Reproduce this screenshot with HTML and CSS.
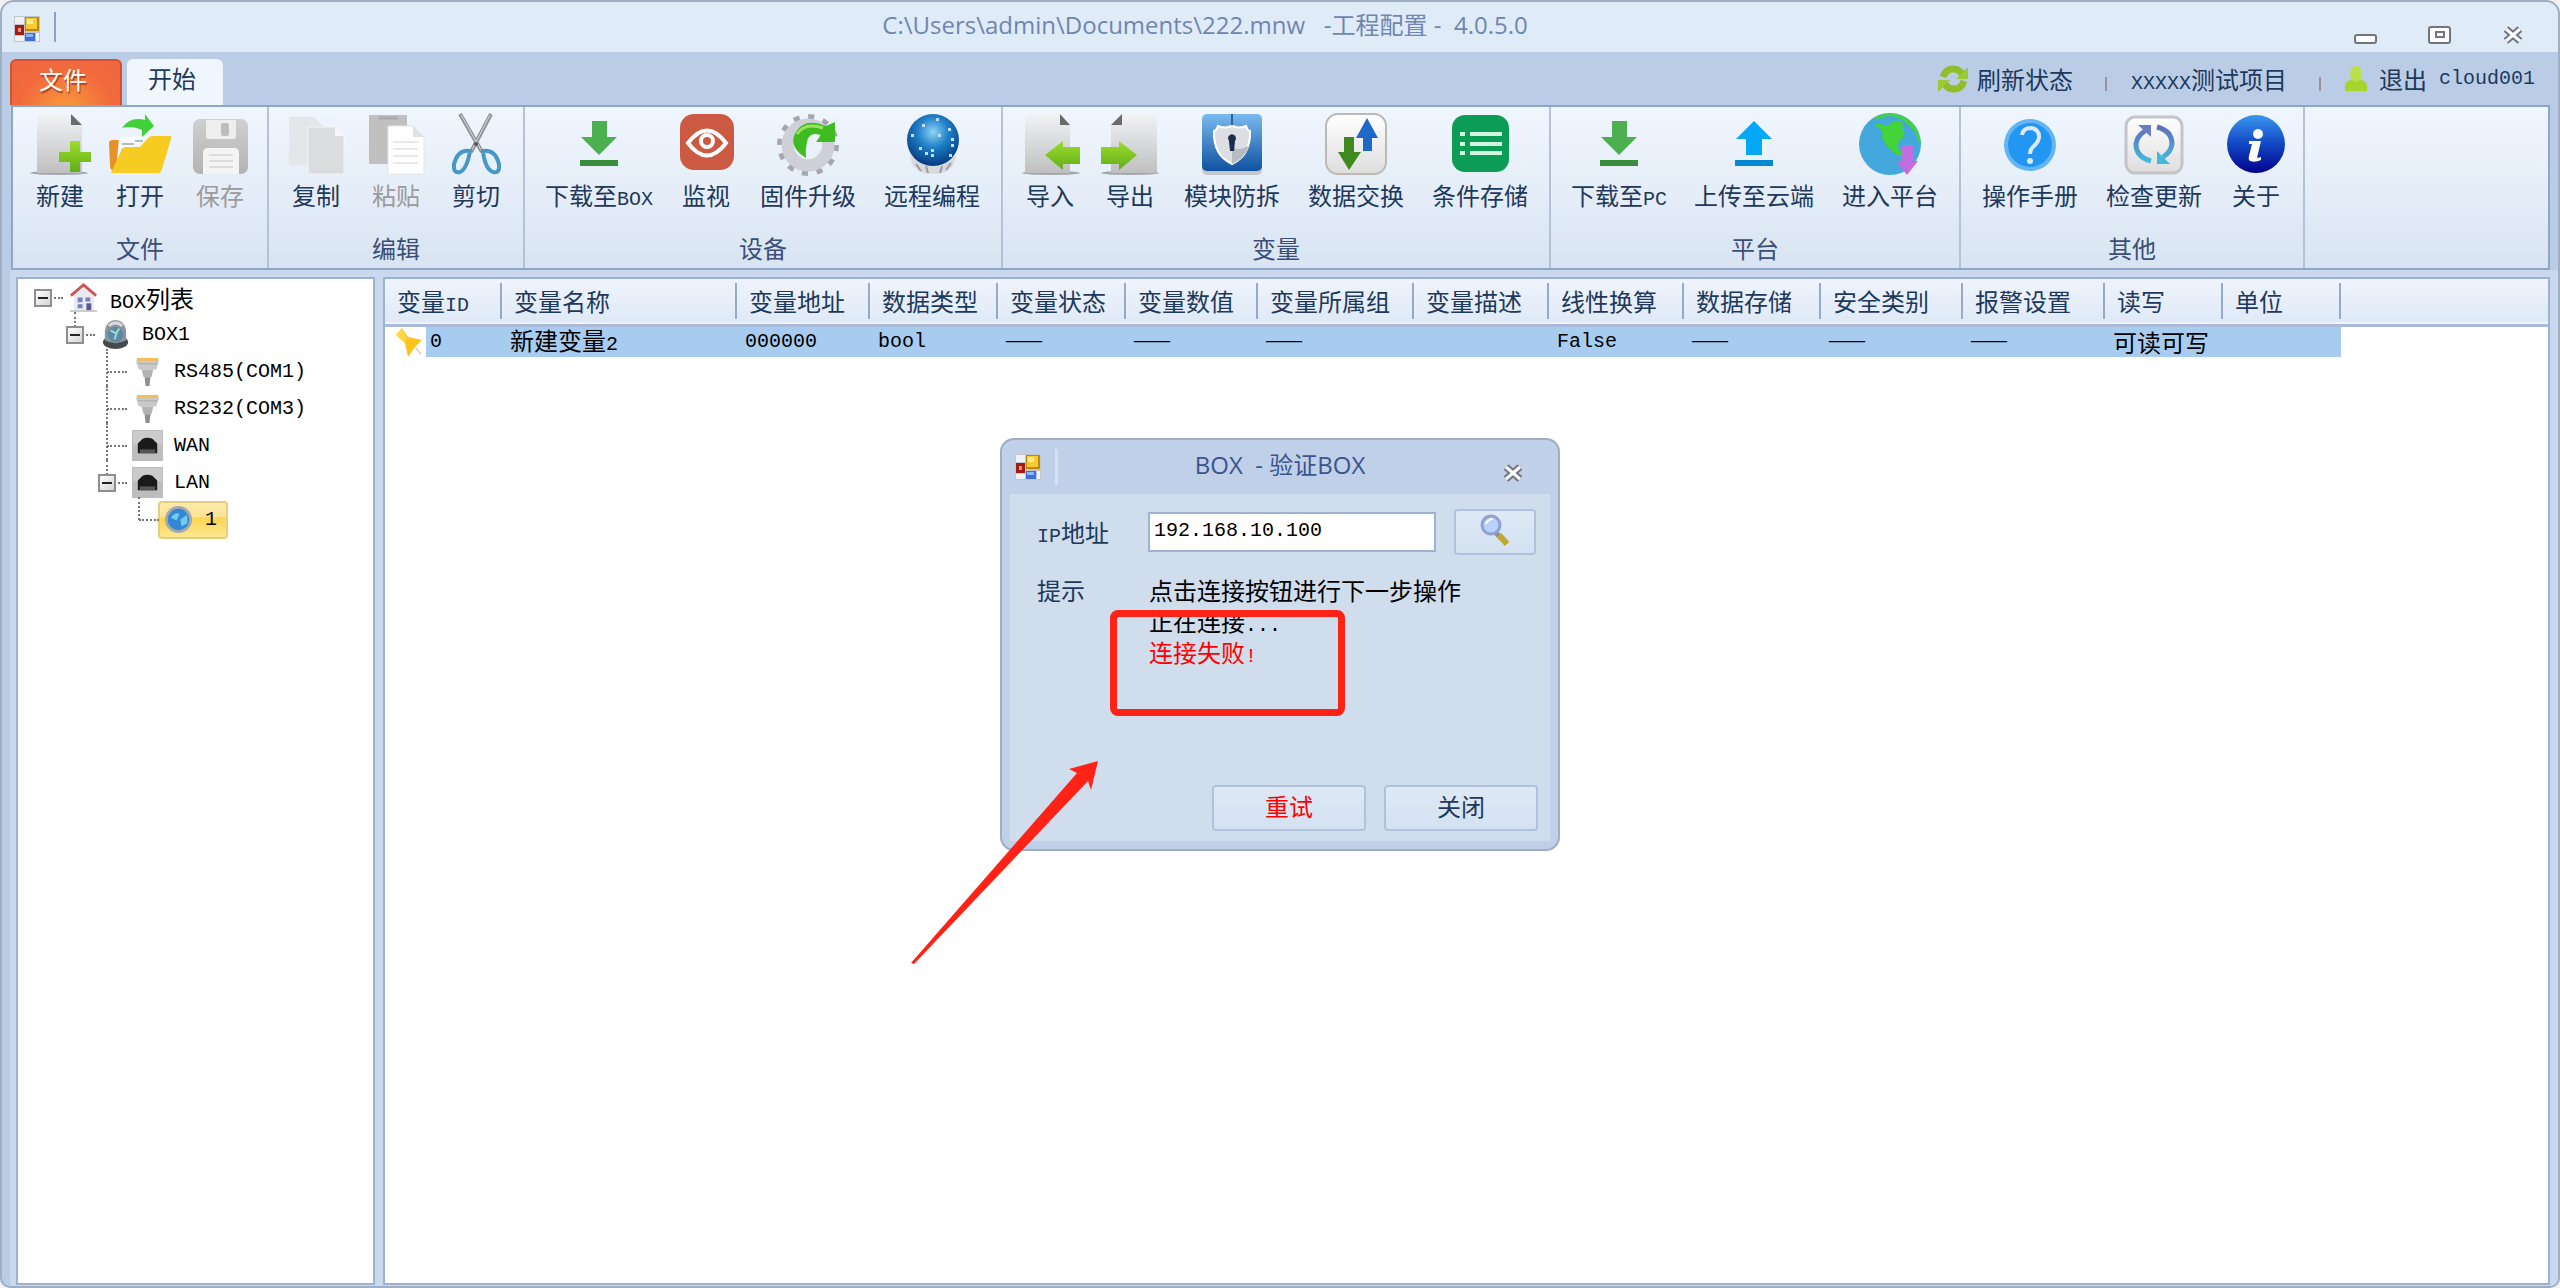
FILE: index.html
```html
<!DOCTYPE html>
<html lang="zh-CN">
<head>
    <meta charset="UTF-8">
    <meta name="viewport" content="width=device-width, initial-scale=1.0">
    <title>工程配置 - 4.0.5.0</title>
    <link rel="stylesheet" href="styles.css">
</head>
<body>
    <!-- gradientes e símbolos reutilizados -->
    <svg class="defs" aria-hidden="true">
        <defs>
            <linearGradient id="gPage" x1="0" y1="0" x2="0" y2="1"><stop offset="0" stop-color="#f1f3f6"/><stop offset="1" stop-color="#bfbfbf"/></linearGradient>
            <linearGradient id="gGreen" x1="0" y1="0" x2="0" y2="1"><stop offset="0" stop-color="#9fdc2c"/><stop offset="1" stop-color="#5fae1a"/></linearGradient>
            <linearGradient id="gGray" x1="0" y1="0" x2="0" y2="1"><stop offset="0" stop-color="#cfcfcf"/><stop offset="1" stop-color="#b3b3b3"/></linearGradient>
            <linearGradient id="gWhite" x1="0" y1="0" x2="0" y2="1"><stop offset="0" stop-color="#ffffff"/><stop offset="1" stop-color="#dedede"/></linearGradient>
            <linearGradient id="gBlue" x1="0" y1="0" x2="0" y2="1"><stop offset="0" stop-color="#7ab9f0"/><stop offset="1" stop-color="#0f52a0"/></linearGradient>
            <linearGradient id="gInfo" x1="0" y1="0" x2="0" y2="1"><stop offset="0" stop-color="#3a97ee"/><stop offset=".5" stop-color="#1247c4"/><stop offset="1" stop-color="#02028c"/></linearGradient>
            <linearGradient id="gArrow" x1="0" y1="0" x2="0" y2="1"><stop offset="0" stop-color="#5f6fb8"/><stop offset="1" stop-color="#45b8dc"/></linearGradient>
            <radialGradient id="gBall" cx=".5" cy=".35" r=".65"><stop offset="0" stop-color="#8fd4f6"/><stop offset=".45" stop-color="#2080c8"/><stop offset="1" stop-color="#033a80"/></radialGradient>
            <symbol id="app" viewBox="0 0 26 26">
                <path d="M0 0h26v26H0z" fill="#c3c5cc"/><path d="M1 1h9v7H1zM1 20h9v5H1zM22 17h3v8h-3z" fill="#eef1f8"/>
                <path d="M11 1h14v14H11z" fill="#b98a10"/><path d="M12 2h11v11H12z" fill="#f6cb34"/><path d="M13 3h6v5h-6z" fill="#fde98e"/>
                <path d="M1 9h9v10H1z" fill="#a01c14"/><path d="M4 12h3v4H4z" fill="#f09080"/>
                <path d="M11 17h10v8H11z" fill="#3c6fd8"/><path d="M12 18h7v3h-7z" fill="#8db6f8"/>
            </symbol>
            <symbol id="down" viewBox="0 0 64 64">
                <path d="M25 9h15v16h10L32 43 14 25h11z" fill="#4caf50"/><path d="M13 48h38v6H13z" fill="#388e3c"/>
            </symbol>
            <symbol id="close" viewBox="0 0 22 18">
                <path d="M4 3l14 12M18 3L4 15" stroke="#70757f" stroke-width="7"/><path d="M4 3l14 12M18 3L4 15" stroke="#fff" stroke-width="3"/>
            </symbol>
            <symbol id="serial" viewBox="0 0 32 32">
                <path d="M5 2h22v4H5z" fill="#f6bd55"/><path d="M4 5h24l-3 9H7z" fill="#c9c9c9"/><path d="M6 8h20" stroke="#a9a9a9"/><path d="M10 14h12l-2 8h-8z" fill="#b3b3b3"/><path d="M13 22h6l-1 9h-4z" fill="#8e8e8e"/>
            </symbol>
            <symbol id="port" viewBox="0 0 32 32">
                <path d="M0 0h32v32H0z" fill="#bdbdbd"/><path d="M1 1h30v14H1z" fill="#cbcbcb"/><path d="M6 24V14l5-5q5-2 10 0l5 5v10z" fill="#1a1a1a"/><path d="M8 24v-4h16v4z" fill="#555"/>
            </symbol>
        </defs>
    </svg>

    <div class="window">
        <header class="titlebar">
            <svg class="app-icon"><use href="#app"/></svg>
            <h1 class="title">C:\Users\admin\Documents\222.mnw&nbsp;&nbsp; -工程配置 -&nbsp; 4.0.5.0</h1>
            <div class="controls">
                <button type="button" aria-label="最小化"><svg width="24" height="18" viewBox="0 0 24 18"><rect x="1" y="9" width="21" height="8" rx="2" fill="#fff" stroke="#70757f" stroke-width="2"/></svg></button>
                <button type="button" aria-label="最大化"><svg width="24" height="18" viewBox="0 0 24 18"><rect x="1" y="1" width="21" height="16" rx="2" fill="#fff" stroke="#70757f" stroke-width="2"/><rect x="8" y="6" width="8" height="5" fill="#fff" stroke="#70757f" stroke-width="2"/></svg></button>
                <button type="button" aria-label="关闭"><svg width="22" height="18"><use href="#close"/></svg></button>
            </div>
        </header>

        <nav class="tabs">
            <button type="button" class="tab tab-file">文件</button>
            <button type="button" class="tab tab-home">开始</button>
            <div class="account">
                <button type="button" class="link-btn">
                    <svg width="31" height="30" viewBox="0 0 31 30"><path d="M5 13Q8 4 16 5q5 0 9 6M26 17q-3 9-11 8-5 0-9-6" fill="none" stroke="#8fbe2b" stroke-width="7"/><path d="M30 3v12H18zM0 28V16h12z" fill="#9aca35"/></svg>
                    刷新状态
                </button>
                <span class="bar"></span>
                <span><span class="en">XXXXX</span>测试项目</span>
                <span class="bar"></span>
                <button type="button" class="link-btn logout">
                    <svg width="22" height="26" viewBox="0 0 22 26"><path d="M0 25v-5q0-5 6-6h10q6 1 6 6v5z" fill="#a8d42e"/><ellipse cx="11" cy="8" rx="6" ry="8" fill="#b9df4a"/></svg>
                    退出
                </button>
                <span class="en">cloud001</span>
            </div>
        </nav>

        <section class="ribbon">
            <div class="group">
                <div class="tools">
                    <button type="button" class="tool">
                        <svg class="ico" viewBox="0 0 64 64"><ellipse cx="31" cy="61" rx="29" ry="2" fill="#a3a7ad"/><path d="M9 2h34l11 11v48H9z" fill="url(#gPage)"/><path d="M43 2v11h11z" fill="#6a6a6a"/><path d="M42 29h10v11h11v10H52v10H42V50H31V40h11z" fill="url(#gGreen)"/></svg>
                        <span>新建</span>
                    </button>
                    <button type="button" class="tool">
                        <svg class="ico" viewBox="0 0 64 64"><path d="M1 31q0-3 4-3h10v30H5q-3 0-3-4z" fill="#e8902a"/><path d="M11 26l20-2 12 2-9 32H8z" fill="#f8f9fb"/><path d="M14 32h12M13 38h9M27 29h8" stroke="#a9bccb" stroke-width="2"/><path d="M3 61l11-24q1-2 4-2h14l8-9q2-2 5-2h16q3 0 2 3l-9 30q-1 4-4 4z" fill="#f6cb22"/><path d="M14 16Q22 4 37 8V2l9 12-12 11v-7q-10-5-20-2z" fill="#42d039"/></svg>
                        <span>打开</span>
                    </button>
                    <button type="button" class="tool" disabled>
                        <svg class="ico" viewBox="0 0 64 64"><rect x="5" y="7" width="55" height="55" rx="7" fill="url(#gGray)"/><path d="M18 8h30v16q0 3-3 3H21q-3 0-3-3z" fill="#eee"/><rect x="33" y="11" width="8" height="13" rx="2" fill="#bdbdbd"/><path d="M15 62V41q0-5 5-5h26q5 0 5 5v21z" fill="#f4f4f4"/><path d="M21 43h24M21 49h24M21 55h24" stroke="#ddd" stroke-width="2"/></svg>
                        <span>保存</span>
                    </button>
                </div>
                <h2>文件</h2>
            </div>
            <div class="group">
                <div class="tools">
                    <button type="button" class="tool">
                        <svg class="ico" viewBox="0 0 64 64"><path d="M5 5h25l9 9v39H5z" fill="#e4e6e9"/><path d="M24 15h27l9 9v38H24z" fill="#dadcde" stroke="#f4f5f7"/><path d="M51 15v9h9z" fill="#f7f7f7"/></svg>
                        <span>复制</span>
                    </button>
                    <button type="button" class="tool" disabled>
                        <svg class="ico" viewBox="0 0 64 64"><path d="M5 3h38v49H5z" fill="#c0c0c0"/><path d="M15 6h19" stroke="#aaa" stroke-width="3"/><path d="M24 14h25l11 11v37H24z" fill="#fff" stroke="#e3e5e8"/><path d="M49 14v11h11z" fill="#e0e0e0"/><path d="M29 30h25M29 37h25M29 44h25M29 51h25" stroke="#e9e9e9" stroke-width="2"/></svg>
                        <span>粘贴</span>
                    </button>
                    <button type="button" class="tool">
                        <svg class="ico" viewBox="0 0 64 64"><path d="M16 2l22 38M47 2L27 40" stroke="#8f9399" stroke-width="4"/><path d="M17 3l20 35M46 3L28 38" stroke="#d9dce0"/><circle cx="32" cy="32" r="2" fill="#555"/><path d="M26 39q-12-2-16 13-1 10 6 8 7-3 10-21zM39 39q12-2 16 13 1 10-6 8-8-3-10-21z" fill="#e3f1fa" stroke="#4798c4" stroke-width="4"/></svg>
                        <span>剪切</span>
                    </button>
                </div>
                <h2>编辑</h2>
            </div>
            <div class="group">
                <div class="tools">
                    <button type="button" class="tool mixed">
                        <svg class="ico"><use href="#down"/></svg>
                        <span>下载至<span class="en">BOX</span></span>
                    </button>
                    <button type="button" class="tool">
                        <svg class="ico" viewBox="0 0 64 64"><rect x="6" y="2" width="54" height="56" rx="14" fill="#cc5a43"/><path d="M14 31q19-25 38 0-19 25-38 0z" fill="none" stroke="#fff" stroke-width="4"/><circle cx="33" cy="29" r="6" fill="none" stroke="#fff" stroke-width="4"/></svg>
                        <span>监视</span>
                    </button>
                    <button type="button" class="tool">
                        <svg class="ico" viewBox="0 0 64 64"><circle cx="32" cy="33" r="28" fill="none" stroke="#a5a5b0" stroke-width="6" stroke-dasharray="6 8.66"/><circle cx="32" cy="33" r="20" fill="none" stroke="#cfcfd8" stroke-width="13"/><circle cx="32" cy="33" r="14" fill="none" stroke="#f2f2f6" stroke-width="1"/><path d="M30 46Q14 36 18 24 26 4 50 14l9-4v20H40l5-7q-12-4-14 7-2 8-1 16z" fill="#3fbd20"/><path d="M21 22q8-12 26-6" fill="none" stroke="#9be35e" stroke-width="3"/></svg>
                        <span>固件升级</span>
                    </button>
                    <button type="button" class="tool">
                        <svg class="ico" viewBox="0 0 64 64"><path d="M10 44q2 18 23 18t23-18z" fill="#d9dadd"/><path d="M16 52l5 7M26 54l2 7M42 54l-2 7M51 51l-5 7" stroke="#999da3" stroke-width="2"/><circle cx="33" cy="28" r="26" fill="url(#gBall)"/><path d="M19 35h3v3h-3zM25 40h3v3h-3zM31 37h3v3h-3zM31 42h3v3h-3zM38 22h3v3h-3zM48 16h3v3h-3zM51 26h3v3h-3zM51 32h3v3h-3zM49 42h3v3h-3zM22 12h3v3h-3zM36 6h3v3h-3zM11 22h3v3h-3z" fill="#b9e2fa"/></svg>
                        <span>远程编程</span>
                    </button>
                </div>
                <h2>设备</h2>
            </div>
            <div class="group">
                <div class="tools">
                    <button type="button" class="tool">
                        <svg class="ico" viewBox="0 0 64 64"><ellipse cx="33" cy="61" rx="29" ry="2" fill="#a3a7ad"/><path d="M7 2h35l10 11v48H7z" fill="url(#gPage)"/><path d="M42 2v11h10z" fill="#6a6a6a"/><path d="M27 43l18-14v6h17v17H45v6z" fill="url(#gGreen)"/></svg>
                        <span>导入</span>
                    </button>
                    <button type="button" class="tool">
                        <svg class="ico" viewBox="0 0 64 64"><ellipse cx="32" cy="61" rx="29" ry="2" fill="#a3a7ad"/><path d="M24 2h35v59H13V13z" fill="url(#gPage)"/><path d="M24 2v11H13z" fill="#6a6a6a"/><path d="M39 43L21 29v6H3v17h18v6z" fill="url(#gGreen)"/></svg>
                        <span>导出</span>
                    </button>
                    <button type="button" class="tool">
                        <svg class="ico" viewBox="0 0 64 64"><rect x="2" y="5" width="60" height="58" rx="5" fill="#c4c8ce"/><rect x="2" y="2" width="60" height="57" rx="5" fill="url(#gBlue)"/><path d="M32 2v12" stroke="#2e5f95" stroke-width="2"/><path d="M18 14q6 3 14 0 8 3 14 0 1 4 4 5 1 24-18 33Q13 43 14 19q3-1 4-5z" fill="#dcdee2" stroke="#fff" stroke-width="2"/><path d="M32 29q-1 13 17 5-4 12-17 18z" fill="#b7bbc2"/><path d="M28 26a4 4 0 1 1 7 3l-1 10h-4l-1-10z" fill="#1a2c50"/></svg>
                        <span>模块防拆</span>
                    </button>
                    <button type="button" class="tool">
                        <svg class="ico" viewBox="0 0 64 64"><rect x="2" y="2" width="60" height="60" rx="12" fill="url(#gWhite)" stroke="#bcb9b4" stroke-width="2"/><path d="M20 25h10v15h7L25 58 14 40h6z" fill="#3f8a1e"/><path d="M39 39V26h-7L43 6l11 20h-6v13z" fill="#1f68c8"/></svg>
                        <span>数据交换</span>
                    </button>
                    <button type="button" class="tool">
                        <svg class="ico" viewBox="0 0 64 64"><rect x="4" y="3" width="57" height="57" rx="13" fill="#0b9d56"/><path d="M22 22h32M22 32h32M22 41h32M12 22h5M12 32h5M12 41h5" stroke="#d5f5e3" stroke-width="4"/></svg>
                        <span>条件存储</span>
                    </button>
                </div>
                <h2>变量</h2>
            </div>
            <div class="group">
                <div class="tools">
                    <button type="button" class="tool mixed">
                        <svg class="ico"><use href="#down"/></svg>
                        <span>下载至<span class="en">PC</span></span>
                    </button>
                    <button type="button" class="tool">
                        <svg class="ico" viewBox="0 0 64 64"><path d="M32 9l18 18H40v16H24V27H14z" fill="#03a9f4"/><path d="M13 48h38v6H13z" fill="#0288d1"/></svg>
                        <span>上传至云端</span>
                    </button>
                    <button type="button" class="tool">
                        <svg class="ico" viewBox="0 0 64 64"><circle cx="32" cy="32" r="31" fill="#45a8dc"/><path d="M16 6Q30-2 44 4q17 8 19 28-3-2-5-10-8-14-24-18-10 0-14 4zM18 12q8 0 12 2 4-6 11-5 6 3 3 8 5 3 0 10-4 2-5 8 6 6 7 10-16-4-22-20 2-8-7-11z" fill="#43d43a"/><path d="M43 33h12v16h5L49 63 38 49h5z" fill="#c06ee0"/></svg>
                        <span>进入平台</span>
                    </button>
                </div>
                <h2>平台</h2>
            </div>
            <div class="group">
                <div class="tools">
                    <button type="button" class="tool">
                        <svg class="ico" viewBox="0 0 64 64"><circle cx="32" cy="33" r="26" fill="#64b5f6"/><circle cx="32" cy="33" r="22" fill="#2196f3"/><path d="M24 23q1-7 9-7 8 1 8 9 0 4-5 9-4 3-4 8" fill="none" stroke="#dceaf7" stroke-width="4"/><circle cx="32" cy="49" r="3" fill="#dceaf7"/></svg>
                        <span>操作手册</span>
                    </button>
                    <button type="button" class="tool">
                        <svg class="ico" viewBox="0 0 64 64"><rect x="4" y="5" width="56" height="56" rx="9" fill="url(#gWhite)" stroke="#c3c5c9" stroke-width="3"/><path d="M29 49Q14 45 14 32q1-8 9-13M35 15q15 4 15 17-1 8-9 13" fill="none" stroke="url(#gArrow)" stroke-width="5"/><path d="M16 13h13v12z" fill="#6b7cc2"/><path d="M48 52H35V39z" fill="#45b8dc"/></svg>
                        <span>检查更新</span>
                    </button>
                    <button type="button" class="tool">
                        <svg class="ico" viewBox="0 0 64 64"><circle cx="32" cy="32" r="29" fill="url(#gInfo)"/><circle cx="34" cy="22" r="5" fill="#fff"/><path d="M25 29h12l-4 17 4-1v3q-6 3-11 1-2-1-1-5l3-12h-3z" fill="#fff"/></svg>
                        <span>关于</span>
                    </button>
                </div>
                <h2>其他</h2>
            </div>
        </section>

        <main class="workspace">
            <aside class="panel tree">
                <ul>
                    <li>
                        <div class="node"><button type="button" class="fold" aria-label="折叠"></button>
                            <svg class="node-ico" viewBox="0 0 32 32"><path d="M6 15L16 6l11 9v15H6z" fill="#e9e9f3"/><path d="M10 16h5v5h-5zM18 16h5v4h-5zM10 23h5v4h-5z" fill="#7680b4"/><path d="M19 22h5v8h-5z" fill="#5b5792"/><path d="M3 14L16 3l13 11" fill="none" stroke="#cf5350" stroke-width="3"/><path d="M2 30h28" stroke="#ccc" stroke-width="2"/></svg>
                            <span><span class="en">BOX</span>列表</span></div>
                        <ul>
                            <li>
                                <div class="node"><button type="button" class="fold" aria-label="折叠"></button>
                                    <svg class="node-ico" viewBox="0 0 32 32"><ellipse cx="16" cy="24" rx="13" ry="7" fill="#444a4f"/><path d="M5 22V12Q7 1 16 1t11 11v10q-11 6-22 0z" fill="#8c9499"/><circle cx="16" cy="16" r="8" fill="#588ba6"/><path d="M11 12l6 3-2 6M20 10l-3 4" stroke="#a6d6d2" stroke-width="2" fill="none"/><path d="M9 7q7-6 14 0" stroke="#d5d9db" stroke-width="3" fill="none"/></svg>
                                    <span class="en">BOX1</span></div>
                                <ul>
                                    <li><div class="node leaf"><svg class="node-ico"><use href="#serial"/></svg><span class="en">RS485(COM1)</span></div></li>
                                    <li><div class="node leaf"><svg class="node-ico"><use href="#serial"/></svg><span class="en">RS232(COM3)</span></div></li>
                                    <li><div class="node leaf"><svg class="node-ico"><use href="#port"/></svg><span class="en">WAN</span></div></li>
                                    <li>
                                        <div class="node"><button type="button" class="fold" aria-label="折叠"></button><svg class="node-ico"><use href="#port"/></svg><span class="en">LAN</span></div>
                                        <ul>
                                            <li><div class="node leaf"><span class="selected"><svg class="node-ico" viewBox="0 0 32 32"><circle cx="16" cy="16" r="14" fill="#a4a9ad"/><circle cx="16" cy="16" r="11" fill="#3487d4"/><path d="M8 14q5-6 9-4l-3 7zM18 16l7-5v9l-6 3z" fill="#70cbec"/></svg><span class="en">1</span></span></div></li>
                                        </ul>
                                    </li>
                                </ul>
                            </li>
                        </ul>
                    </li>
                </ul>
            </aside>

            <section class="panel grid">
                <table>
                    <colgroup>
                        <col class="c-pin"><col class="c-id"><col class="c-name"><col class="c-addr"><col class="c-type"><col class="c-type"><col class="c-value"><col class="c-group"><col class="c-desc"><col class="c-desc"><col class="c-store"><col class="c-safe"><col class="c-safe"><col class="c-unit"><col class="c-unit"><col>
                    </colgroup>
                    <thead>
                        <tr>
                            <th colspan="2">变量<span class="en">ID</span></th><th>变量名称</th><th>变量地址</th><th>数据类型</th><th>变量状态</th><th>变量数值</th><th>变量所属组</th><th>变量描述</th><th>线性换算</th><th>数据存储</th><th>安全类别</th><th>报警设置</th><th>读写</th><th>单位</th><th></th>
                        </tr>
                    </thead>
                    <tbody>
                        <tr>
                            <td class="pin"><svg width="28" height="30" viewBox="0 0 28 30"><path d="M7 1l6 9 14 3-7 7-7 10-3-14-9-8z" fill="#fbc31c"/><path d="M7 1l5 10-2 5-9-8z" fill="#ffd54a"/><path d="M20 20l6 7" stroke="#e8d9c0" stroke-width="2"/></svg></td>
                            <td class="first en">0</td><td>新建变量<span class="en">2</span></td><td class="en">000000</td><td class="en">bool</td><td class="en">———</td><td class="en">———</td><td class="en">———</td><td></td><td class="en">False</td><td class="en">———</td><td class="en">———</td><td class="en">———</td><td>可读可写</td><td></td><td class="rest"></td>
                        </tr>
                    </tbody>
                </table>
            </section>
        </main>
    </div>

    <div class="overlay">
        <form class="dialog">
            <header class="dialog-title">
                <svg class="app-icon"><use href="#app"/></svg>
                <h2>BOX&nbsp; - 验证BOX</h2>
                <button type="button" aria-label="关闭"><svg width="22" height="18"><use href="#close"/></svg></button>
            </header>
            <div class="dialog-body">
                <div class="field">
                    <label for="ip"><span class="en">IP</span>地址</label>
                    <input type="text" id="ip" name="ip" class="en" value="192.168.10.100">
                    <button type="button" class="btn btn-search" aria-label="搜索">
                        <svg width="30" height="34" viewBox="0 0 30 34"><path d="M15 19l11 11" stroke="#8d8d8d" stroke-width="5"/><path d="M19 22l8 9" stroke="#bfa92e" stroke-width="6"/><circle cx="11" cy="12" r="9" fill="#b9d2fb" stroke="#8fa3cf" stroke-width="3"/><path d="M6 11q2-5 7-5" fill="none" stroke="#fff" stroke-width="2"/></svg>
                    </button>
                </div>
                <div class="hint">
                    <span class="hint-label">提示</span>
                    <div class="log">
                        <p>点击连接按钮进行下一步操作</p>
                        <p>正在连接<span class="en">...</span></p>
                        <p class="error">连接失败<span class="en">!</span></p>
                    </div>
                </div>
                <div class="actions">
                    <button type="button" class="btn btn-retry">重试</button>
                    <button type="button" class="btn">关闭</button>
                </div>
            </div>
            <div class="mark-box"></div>
            <svg class="mark-arrow" viewBox="0 0 190 206"><path d="M187 1l-7 29-3-9L3 204l-3-1L166 13l-8-4z" fill="#ff2216"/></svg>
        </form>
    </div>
</body>
</html>
```

FILE: styles.css
```css
* {
    box-sizing: border-box;
}
body {
    margin: 0;
    background: #f2f2f2;
    font-family: "Noto Sans CJK SC", sans-serif;
    font-size: 24px;
    line-height: 32px;
    color: #1e395b;
}
button {
    margin: 0;
    padding: 0;
    border: none;
    background: none;
    font: inherit;
    color: inherit;
}
h1, h2, p, ul {
    margin: 0;
    padding: 0;
    font-size: inherit;
    font-weight: normal;
}
svg {
    display: block;
    flex: none;
}
.defs {
    position: absolute;
    width: 0;
    height: 0;
}
.en {
    font-family: "Liberation Mono", monospace;
    font-size: 20px;
    line-height: 1;
}

/* Janela principal */
.window {
    display: flex;
    flex-direction: column;
    height: 100vh;
    background: #bbcde6;
    border: 2px solid #a0aec1;
    border-radius: 14px 14px 10px 10px;
    overflow: hidden;
}
.titlebar {
    display: flex;
    align-items: center;
    height: 50px;
    padding: 0 34px 0 12px;
    background: #dfebf7;
}
.app-icon {
    width: 26px;
    height: 26px;
}
.titlebar .app-icon {
    margin: 4px 14px 0 0;
}
.title {
    flex: 1;
    height: 30px;
    border-left: 2px solid #8ba0c3;
    text-align: center;
    font-family: "Open Sans", "Noto Sans CJK SC", sans-serif;
    line-height: 26px;
    color: #7085b2;
}
.controls {
    display: flex;
    gap: 50px;
    padding-top: 16px;
}

.tabs {
    display: flex;
    align-items: flex-end;
    gap: 5px;
    height: 53px;
    padding: 0 23px 0 8px;
}
.tab {
    height: 46px;
    padding: 0 6px 8px 0;
    border-radius: 6px 6px 0 0;
}
.tab-file {
    width: 112px;
    border: 2px solid #d1532f;
    border-bottom: none;
    background: radial-gradient(ellipse at 50% 110%, #f89a3c 0, #f26a3c 60%, #ee6640 100%);
    color: #fff;
    text-shadow: 1px 2px 1px #a8431f;
}
.tab-home {
    width: 96px;
    background: #eff6fe;
}
.account {
    display: flex;
    align-items: center;
    height: 53px;
    margin-left: auto;
}
.link-btn {
    display: flex;
    align-items: center;
    gap: 8px;
}
.logout {
    gap: 12px;
    margin-right: 12px;
}
.bar {
    width: 2px;
    height: 14px;
    margin: 10px 24px 0 32px;
    background: #a08f95;
}

/* Faixa de ferramentas */
.ribbon {
    display: flex;
    height: 165px;
    margin: 0 8px 0 9px;
    border: 2px solid #8ea6c8;
    background: linear-gradient(#f0f6fe, #e3ecf7 60%, #d8e4f2);
}
.group {
    display: flex;
    flex-direction: column;
    justify-content: space-between;
    padding: 5px 7px 0 7px;
    border-right: 2px solid #b3c2d8;
}
.group h2 {
    padding-bottom: 4px;
    text-align: center;
    color: #3b4f76;
}
.tools {
    display: flex;
}
.tool {
    display: flex;
    flex-direction: column;
    align-items: center;
    gap: 3px;
    min-width: 80px;
    padding: 0 14px;
    white-space: nowrap;
}
.tool.mixed {
    padding: 0 13px;
}
.tool:hover {
    background: #fbe7a3;
}
.tool:disabled {
    background: none;
    color: #9b9b9b;
}
.ico {
    width: 64px;
    height: 64px;
}
.tool svg {
    margin: 0 -8px;
}

/* Área de trabalho */
.workspace {
    display: flex;
    flex: 1;
    gap: 8px;
    min-height: 0;
    margin-left: 8px;
    padding: 7px 8px 1px 6px;
    background: #c9d8ec;
}
.panel {
    border: 2px solid #9db2d2;
    background: #fff;
}
.tree {
    width: 359px;
    color: #000;
}
.tree ul {
    list-style: none;
}
.tree ul ul {
    padding-left: 32px;
}
.tree > ul {
    padding-left: 16px;
}
.tree li {
    position: relative;
}
.tree li li::before {
    content: "";
    position: absolute;
    left: 8px;
    top: -4px;
    height: 100%;
    border-left: 2px dotted #777;
}
.tree li li:last-child::before {
    height: 23px;
}
.node {
    position: relative;
    display: flex;
    align-items: center;
    height: 37px;
}
.node::before {
    content: "";
    position: absolute;
    left: 9px;
    top: 18px;
    width: 20px;
    border-top: 2px dotted #777;
}
.fold {
    position: relative;
    width: 18px;
    height: 18px;
    margin-right: 16px;
    border: 2px solid #8e8e8e;
    background: linear-gradient(135deg, #fff, #d4d4d4);
}
.fold::before {
    content: "";
    display: block;
    height: 2px;
    margin: 0 2px;
    background: #222;
}
.node-ico {
    width: 31px;
    height: 31px;
    margin-right: 11px;
}
.leaf {
    padding-left: 34px;
}
.selected {
    display: flex;
    align-items: center;
    height: 38px;
    margin-left: -6px;
    padding: 0 9px 0 3px;
    border: 2px solid #e6cd7c;
    border-radius: 4px;
    background: linear-gradient(#fdebab 0, #fce493 40%, #fdd553 45%, #fde791 100%);
}

/* Tabela de variáveis */
.grid {
    flex: 1;
    min-width: 0;
    overflow: hidden;
}
table {
    width: 100%;
    border-collapse: collapse;
    table-layout: fixed;
}
th, td {
    padding: 0;
    text-align: left;
    font-weight: normal;
    white-space: nowrap;
}
thead {
    background: linear-gradient(#eff4fc, #dfe9f7);
    border-bottom: 3px solid #a9bbd8;
}
th {
    height: 46px;
    padding: 0 0 0 12px;
    background: linear-gradient(#93a9cd, #93a9cd) right center / 2px 36px no-repeat;
}
th:last-child {
    background: none;
}
td {
    height: 32px;
    padding-left: 8px;
    background: #a8ccf0;
    color: #000;
    line-height: 24px;
}
td.pin {
    padding-left: 10px;
    background: #fff;
}
td.first {
    padding-left: 4px;
}
td.rest {
    background: #fff;
}
.c-pin { width: 41px; }
.c-id { width: 76px; }
.c-name { width: 235px; }
.c-addr { width: 133px; }
.c-type { width: 128px; }
.c-value { width: 132px; }
.c-group { width: 156px; }
.c-desc { width: 135px; }
.c-store { width: 137px; }
.c-safe { width: 142px; }
.c-unit { width: 118px; }

/* Caixa de diálogo */
.overlay {
    position: fixed;
    inset: 0;
    display: flex;
    align-items: center;
    justify-content: center;
}
.dialog {
    position: relative;
    width: 560px;
    padding: 0 8px 8px;
    border: 2px solid #9eadc2;
    border-radius: 14px;
    background: #c0d0e8;
}
.dialog-title {
    display: flex;
    align-items: center;
    height: 54px;
    padding: 0 26px 0 5px;
}
.dialog-title h2 {
    flex: 1;
    height: 36px;
    margin-left: 14px;
    border-left: 3px solid #d5e1f1;
    text-align: center;
    font-family: "Open Sans", "Noto Sans CJK SC", sans-serif;
    color: #3a5590;
}
.dialog-title button {
    padding-top: 12px;
}
.dialog-body {
    padding: 15px 12px 10px 27px;
    background: #d0dded;
}
.field {
    display: flex;
    align-items: center;
    height: 46px;
}
.field label {
    width: 111px;
}
.field input {
    flex: 1;
    min-width: 0;
    height: 40px;
    padding: 0 4px 2px;
    border: 2px solid #9cb3d6;
    background: #fff;
    color: #000;
}
.btn {
    width: 154px;
    height: 46px;
    padding-bottom: 3px;
    border: 2px solid #afc1db;
    border-radius: 4px;
    background: linear-gradient(#dfe9f6, #d3e1f1);
}
.btn-search {
    display: flex;
    align-items: center;
    justify-content: center;
    width: 82px;
    margin: 0 2px 0 18px;
}
.btn-retry {
    color: #ff0000;
}
.hint {
    display: flex;
    height: 206px;
    margin-top: 19px;
    line-height: 31px;
}
.hint-label {
    width: 112px;
}
.log {
    color: #000;
}
.log .error {
    color: #ff0000;
}
.actions {
    display: flex;
    justify-content: flex-end;
    gap: 18px;
    margin-top: 5px;
}
/* Marcações vermelhas sobre o diálogo */
.mark-box {
    position: absolute;
    left: 108px;
    top: 170px;
    width: 235px;
    height: 106px;
    border: 7px solid #ff2216;
    border-radius: 8px;
}
.mark-arrow {
    position: absolute;
    left: -91px;
    top: 320px;
    width: 190px;
    height: 206px;
}
```
